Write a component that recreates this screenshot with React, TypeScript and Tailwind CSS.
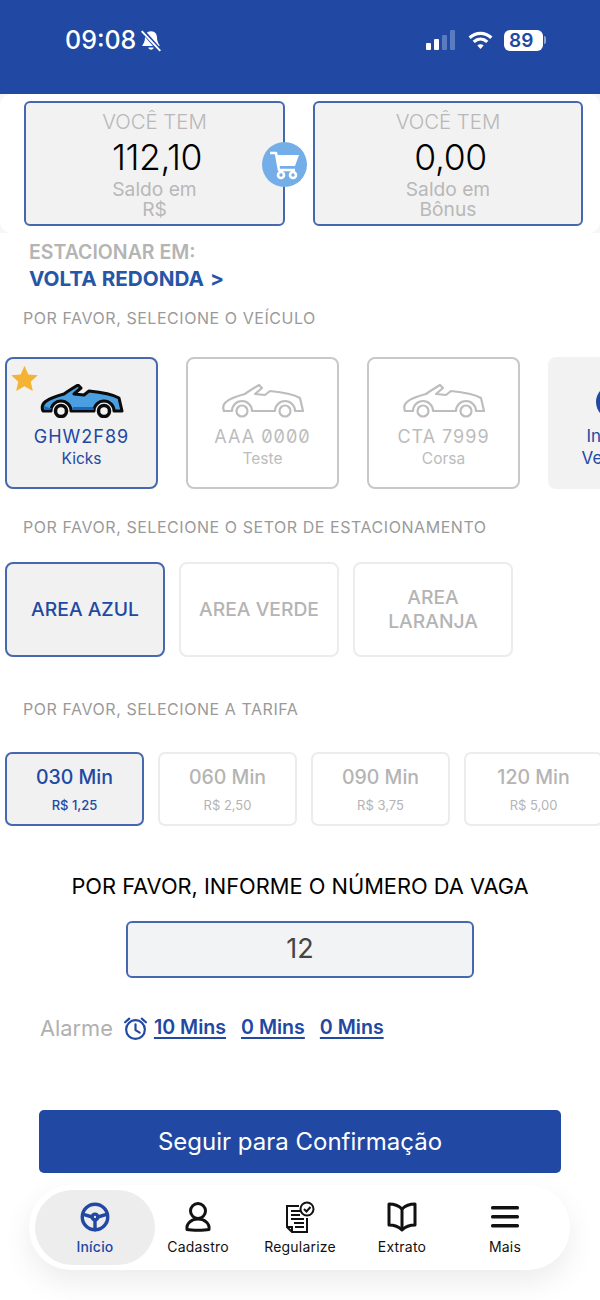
import React from "react";
import { TbSteeringWheel } from "react-icons/tb";

const BLUE = "#2148a3";

function Car({ active }: { active?: boolean }) {
  const body = "M3 27 C0 20 5 15 24 10 C28 7 33 4 38 1 L41 4 L34 10 L44 11 L49 7 C60 8 72 10 79 14 L82 27 L74 27 A10 10 0 0 0 54 27 L31 27 A10 10 0 0 0 11 27 Z";
  if (active) {
    return (
      <svg width="84" height="34" viewBox="0 0 84 34">
        <path d={body} fill="#4a9fe0" stroke="#0b0b0b" strokeWidth="3" strokeLinejoin="round" />
        <path d="M5 26 C4 24 4 23 5 22 C8 24 10 24 12 24 L10 26 Z M32 26 L33 23 L53 23 L54 26 Z" fill="#1c66bd" />
        <circle cx="21" cy="27" r="5.5" fill="#f2f2f2" stroke="#0b0b0b" strokeWidth="3.5" />
        <circle cx="64" cy="27" r="5.5" fill="#f2f2f2" stroke="#0b0b0b" strokeWidth="3.5" />
      </svg>
    );
  }
  return (
    <svg width="84" height="34" viewBox="0 0 84 34">
      <path d={body} fill="none" stroke="#bdbdbd" strokeWidth="2.2" strokeLinejoin="round" />
      <circle cx="21" cy="27" r="5.5" fill="none" stroke="#bdbdbd" strokeWidth="2.2" />
      <circle cx="64" cy="27" r="5.5" fill="none" stroke="#bdbdbd" strokeWidth="2.2" />
    </svg>
  );
}

function BalanceCard({ value, l1, l2, w }: { value: string; l1: string; l2: string; w: string }) {
  return (
    <div className={`${w} h-[125px] rounded-[6px] border-2 border-[#4668ae] bg-[#f2f2f2] flex flex-col items-center pt-[6px]`}>
      <div className="text-[20.4px] leading-[26px] text-[#b8b8b8] font-light">VOCÊ TEM</div>
      <div className="pl-[5px] text-[35.5px] leading-[38px] mt-[4px] text-black tracking-[-0.4px] font-light">{value}</div>
      <div className="text-[19.2px] leading-[20px] mt-[2px] text-[#b8b8b8]">{l1}</div>
      <div className="text-[19.2px] leading-[20px] text-[#b8b8b8]">{l2}</div>
    </div>
  );
}

function Vehicle({ plate, name, active }: { plate: string; name: string; active?: boolean }) {
  return (
    <div className={`relative shrink-0 w-[153px] h-[132px] rounded-[8px] border-2 flex flex-col items-center pt-[25px] ${active ? "border-[#4668ae] bg-[#f1f1f2]" : "border-[#c8c8c8] bg-white"}`}>
      {active && (
        <svg className="absolute left-[3px] top-[5px]" width="29" height="29" viewBox="0 0 24 24">
          <path d="M12 1.5 L15.2 8.6 L23 9.4 L17.2 14.6 L18.9 22.4 L12 18.4 L5.1 22.4 L6.8 14.6 L1 9.4 L8.8 8.6 Z" fill="#f5b335" />
        </svg>
      )}
      <Car active={active} />
      <div className={`mt-[7px] text-[18px] leading-[24px] tracking-[1px] slashed-zero ${active ? "text-[#2148a3]" : "text-[#bcbcbc]"}`}>{plate}</div>
      <div className={`text-[15.5px] leading-[20px] ${active ? "text-[#2148a3]" : "text-[#bcbcbc]"}`}>{name}</div>
    </div>
  );
}

function Sector({ children, active }: { children: React.ReactNode; active?: boolean }) {
  return (
    <div className={`shrink-0 w-[160px] h-[95px] rounded-[8px] border-2 pb-[2px] flex items-center justify-center text-center text-[19.3px] leading-[24px] font-medium ${active ? "border-[#4668ae] bg-[#f1f1f2] text-[#2148a3]" : "border-[#ececec] bg-white text-[#b4b4b4]"}`}>
      {children}
    </div>
  );
}

function Tariff({ min, price, active }: { min: string; price: string; active?: boolean }) {
  return (
    <div className={`shrink-0 w-[139px] h-[74px] rounded-[7px] border-2 flex flex-col items-center pt-[10px] ${active ? "border-[#4668ae] bg-[#f1f1f2] text-[#2148a3]" : "border-[#ececec] bg-white text-[#b4b4b4]"}`}>
      <div className="text-[19.5px] leading-[26px] font-medium">{min}</div>
      <div className={`mt-[7px] text-[13px] leading-[16px] ${active ? "font-medium" : ""}`}>{price}</div>
    </div>
  );
}

function NavItem({ label, icon, w, active }: { label: string; icon: React.ReactNode; w: string; active?: boolean }) {
  return (
    <div className={`${w} h-[75px] flex flex-col items-center pt-[11px] ${active ? "rounded-[38px] bg-[#ededed] text-[#2148a3] font-medium" : "text-[#111]"}`}>
      <div className="h-[32px] flex items-center justify-center">{icon}</div>
      <div className="mt-[5px] text-[14px] leading-[18px] tracking-[0.2px]">{label}</div>
    </div>
  );
}

export default function App() {
  return (
    <div className="w-[600px] h-[1300px] overflow-hidden bg-white font-['Inter','Liberation_Sans',sans-serif]">
      <header className="h-[94px] bg-[#2148a3] flex justify-between pl-[65px] pr-[54px] pt-[25px] text-white">
        <div className="flex items-start gap-[4px]">
          <span className="text-[25px] leading-[30px] font-medium">09:08</span>
          <svg className="mt-[4px]" width="22" height="23" viewBox="0 0 20 21">
            <path d="M10 2 C6 2 4.5 5 4.5 8 C4.5 12 2.5 14 2 15.5 L18 15.5 C17.5 14 15.5 12 15.5 8 C15.5 5 14 2 10 2 Z M7.5 17 C8 19.5 12 19.5 12.5 17 Z" fill="#fff" />
            <path d="M2 1.5 L18.5 20" stroke="#2148a3" strokeWidth="4" />
            <path d="M1.5 2 L18.5 20" stroke="#fff" strokeWidth="1.8" />
          </svg>
        </div>
        <div className="flex items-start">
          <div className="flex items-end gap-[3px] h-[20px] mt-[5px]">
            <span className="w-[5px] h-[7px] rounded-[1px] bg-white" />
            <span className="w-[5px] h-[11px] rounded-[1px] bg-white" />
            <span className="w-[5px] h-[15px] rounded-[1px] bg-[#5c7cc2]" />
            <span className="w-[5px] h-[20px] rounded-[1px] bg-[#5c7cc2]" />
          </div>
          <svg className="ml-[12px] mt-[6px]" width="27" height="19" viewBox="0 0 28 21">
            <path d="M2 7.5 C9 1 19 1 26 7.5" fill="none" stroke="#fff" strokeWidth="3.6" />
            <path d="M6.5 12 C11 8 17 8 21.5 12" fill="none" stroke="#fff" strokeWidth="3.6" />
            <path d="M10.5 16 L14 19.8 L17.5 16 C15.5 14.3 12.5 14.3 10.5 16 Z" fill="#fff" />
          </svg>
          <div className="ml-[10px] mt-[5px] w-[39px] h-[21px] rounded-[6px] bg-white text-[#2148a3] text-[19px] leading-[21px] font-semibold pl-[5px]">89</div>
          <div className="mt-[11px] ml-[1px] w-[2px] h-[8px] rounded-r-[2px] bg-[#8ea3d3]" />
        </div>
      </header>

      <div className="bg-[#f7f7f7]">
        <div className="relative h-[139px] rounded-[12px] bg-white flex pl-[24px] pt-[7px] gap-[28px]">
          <BalanceCard value="112,10" l1="Saldo em" l2="R$" w="w-[261px]" />
          <BalanceCard value="0,00" l1="Saldo em" l2="Bônus" w="w-[270px]" />
          <div className="absolute left-[262px] top-[48px] w-[45px] h-[45px] rounded-full bg-[#74aee8] flex items-center justify-center">
            <svg width="34" height="34" viewBox="0 0 34 34">
              <path d="M2 5 L8 5 L11 22 L27 22" fill="none" stroke="#fff" strokeWidth="2.6" strokeLinejoin="round" />
              <path d="M9 7 L31 7 L27 18 L11 18 Z" fill="#fff" />
              <circle cx="13" cy="27" r="3" fill="none" stroke="#fff" strokeWidth="2.6" />
              <circle cx="25" cy="27" r="3" fill="none" stroke="#fff" strokeWidth="2.6" />
            </svg>
          </div>
        </div>
      </div>

      <div className="pl-[29px] pt-[7px]">
        <div className="text-[19.5px] leading-[24px] font-semibold text-[#b4b4b4]">ESTACIONAR EM:</div>
        <div className="mt-[3px] flex text-[20.7px] leading-[24px] font-bold text-[#2656a6]">
          <span>VOLTA REDONDA</span>
          <span className="ml-[6px]">&gt;</span>
        </div>
      </div>

      <div className="mt-[17px] pl-[23px] text-[16px] leading-[20px] tracking-[0.55px] text-[#9a9a9a]">POR FAVOR, SELECIONE O VEÍCULO</div>

      <div className="mt-[29px] pl-[5px] flex gap-[28px] overflow-hidden">
        <Vehicle plate="GHW2F89" name="Kicks" active />
        <Vehicle plate="AAA 0000" name="Teste" />
        <Vehicle plate="CTA 7999" name="Corsa" />
        <div className="shrink-0 w-[126px] h-[132px] rounded-[8px] bg-[#f2f2f2] flex flex-col items-center pt-[28px] text-[#2148a3]">
          <div className="ml-[4px] w-[34px] h-[34px] rounded-full bg-[#2148a3]" />
          <div className="mt-[6px] text-[17px] leading-[22px] text-center">Incluir<br />Veículo</div>
        </div>
      </div>

      <div className="mt-[28px] pl-[23px] text-[16px] leading-[20px] tracking-[0.55px] text-[#9a9a9a]">POR FAVOR, SELECIONE O SETOR DE ESTACIONAMENTO</div>

      <div className="mt-[25px] pl-[5px] flex gap-[14px]">
        <Sector active>AREA AZUL</Sector>
        <Sector>AREA VERDE</Sector>
        <Sector>AREA<br />LARANJA</Sector>
      </div>

      <div className="mt-[42px] pl-[23px] text-[16px] leading-[20px] tracking-[0.55px] text-[#9a9a9a]">POR FAVOR, SELECIONE A TARIFA</div>

      <div className="mt-[33px] pl-[5px] flex gap-[14px] overflow-hidden">
        <Tariff min="030 Min" price="R$ 1,25" active />
        <Tariff min="060 Min" price="R$ 2,50" />
        <Tariff min="090 Min" price="R$ 3,75" />
        <Tariff min="120 Min" price="R$ 5,00" />
      </div>

      <div className="mt-[48px] text-center text-[21.8px] leading-[24px] text-black">POR FAVOR, INFORME O NÚMERO DA VAGA</div>

      <div className="mt-[23px] mx-auto w-[348px] h-[57px] rounded-[6px] border-2 border-[#4668ae] bg-[#f2f3f5] flex items-center justify-center text-[27px] text-[#444]">12</div>

      <div className="mt-[37px] pl-[40px] h-[26px] flex items-center">
        <span className="text-[21.8px] text-[#b0b0b0]">Alarme</span>
        <svg className="ml-[10px]" width="25" height="25" viewBox="0 0 24 24" fill="none" stroke="#2148a3" strokeWidth="2.1" strokeLinecap="round" strokeLinejoin="round">
          <circle cx="12" cy="13" r="9" />
          <path d="M12 8 L12 13.5 L16 16" />
          <path d="M2 6 L6 2.5 M22 6 L18 2.5" />
        </svg>
        <span className="ml-[6px] font-semibold text-[19.6px] text-[#2148a3] underline decoration-2 underline-offset-[3px]">10 Mins</span>
        <span className="ml-[15px] font-semibold text-[19.6px] text-[#2148a3] underline decoration-2 underline-offset-[3px]">0 Mins</span>
        <span className="ml-[15px] font-semibold text-[19.6px] text-[#2148a3] underline decoration-2 underline-offset-[3px]">0 Mins</span>
      </div>

      <div className="mt-[69px] mx-auto w-[522px] h-[63px] rounded-[5px] bg-[#2148a3] flex items-center justify-center text-[24px] text-white">Seguir para Confirmação</div>

      <nav className="mt-[12px] ml-[29px] w-[541px] h-[85px] rounded-[42px] bg-white pl-[6px] pt-[5px] flex shadow-[0_12px_30px_rgba(0,0,0,0.08)]">
        <NavItem active w="w-[120px]" label="Início" icon={<TbSteeringWheel size={34} color={BLUE} strokeWidth={2.4} />} />
        <NavItem w="w-[86px]" label="Cadastro" icon={
          <svg width="32" height="32" viewBox="0 0 32 32" fill="none" stroke="#111" strokeWidth="3" strokeLinejoin="round">
            <circle cx="16" cy="10" r="7.5" />
            <path d="M5 28.5 C4 22 10 18 16 18 C22 18 28 22 27 28.5 C22 29.5 10 29.5 5 28.5 Z" />
          </svg>
        } />
        <NavItem w="w-[118px]" label="Regularize" icon={
          <svg width="32" height="32" viewBox="0 0 32 32" fill="none" stroke="#111" strokeWidth="2">
            <path d="M15 5 L3 5 L3 26 L8 31 L23 31 L23 17" />
            <path d="M3 26 L8 26 L8 31" />
            <path d="M7 10 L16 10 M7 14 L16 14 M7 18 L20 18 M10 22 L20 22 M11 26 L20 26" />
            <circle cx="23" cy="8" r="6.5" fill="#fff" />
            <path d="M20 8 L22.5 10.5 L26.5 6" strokeWidth="2" />
          </svg>
        } />
        <NavItem w="w-[86px]" label="Extrato" icon={
          <svg width="32" height="32" viewBox="0 0 32 32" fill="none" stroke="#111" strokeWidth="3" strokeLinejoin="round">
            <path d="M16 8 C12 4 7 3 3 3 L3 24 C8 24 12 25 16 29 C20 25 24 24 29 24 L29 3 C25 3 20 4 16 8 Z" />
            <path d="M16 8 L16 29" />
          </svg>
        } />
        <NavItem w="w-[120px]" label="Mais" icon={
          <svg width="32" height="32" viewBox="0 0 32 32" fill="#111">
            <rect x="2" y="5" width="28" height="3.6" rx="1.5" />
            <rect x="2" y="14" width="28" height="3.6" rx="1.5" />
            <rect x="2" y="23" width="28" height="3.6" rx="1.5" />
          </svg>
        } />
      </nav>
    </div>
  );
}
